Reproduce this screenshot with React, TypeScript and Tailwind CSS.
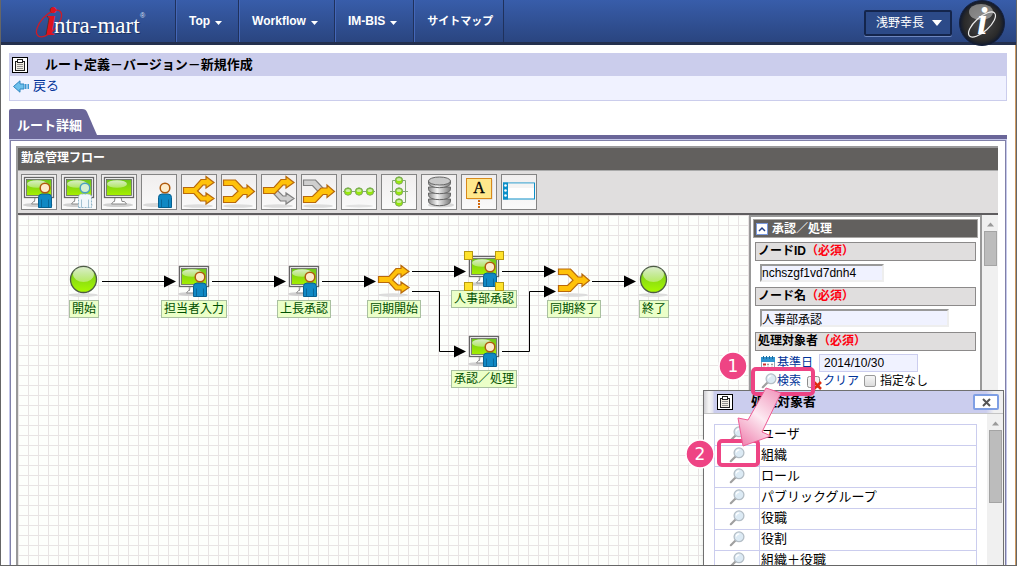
import { useState } from 'react'
import type { ReactNode } from 'react'

const gold = { fill: '#ffc20a', stroke: '#b8690c', strokeWidth: 1.2 }
const silver = { fill: '#cfcfcf', stroke: '#808080', strokeWidth: 1.2 }

// SVG gradients shared by every icon
function Defs() {
  return (
    <svg width="0" height="0" className="absolute" aria-hidden="true">
      <defs>
        <linearGradient id="screen" x1="0" y1="0" x2="0" y2="1">
          <stop offset="0" stopColor="#6cc41c" />
          <stop offset="1" stopColor="#a6f000" />
        </linearGradient>
        <linearGradient id="ball" x1="0" y1="0" x2="0" y2="1">
          <stop offset="0" stopColor="#6fc024" />
          <stop offset="1" stopColor="#a8fa00" />
        </linearGradient>
        <linearGradient id="gloss" x1="0" y1="0" x2="0" y2="1">
          <stop offset="0" stopColor="#ffffff" stopOpacity="0.75" />
          <stop offset="1" stopColor="#ffffff" stopOpacity="0.35" />
        </linearGradient>
        <linearGradient id="disc" x1="0" y1="0" x2="1" y2="0">
          <stop offset="0" stopColor="#8a8a8a" />
          <stop offset="0.4" stopColor="#f4f4f4" />
          <stop offset="1" stopColor="#7a7a7a" />
        </linearGradient>
        <linearGradient id="pinkArrow" x1="0.8" y1="0" x2="0.2" y2="1">
          <stop offset="0" stopColor="#f29cc0" />
          <stop offset="0.5" stopColor="#fdeaf2" />
          <stop offset="1" stopColor="#f08ab4" />
        </linearGradient>
        <radialGradient id="badge">
          <stop offset="0" stopColor="#4a4a4a" />
          <stop offset="0.8" stopColor="#2a2a2a" />
          <stop offset="1" stopColor="#10192e" />
        </radialGradient>
      </defs>
    </svg>
  )
}

function Icon({ children }: { children: ReactNode }) {
  return (
    <svg width="32" height="32" viewBox="0 0 32 32" className="block overflow-visible" aria-hidden="true">
      {children}
    </svg>
  )
}

function Monitor() {
  return (
    <>
      <ellipse cx="15" cy="29" rx="15" ry="2" fill="#d0d0d0" />
      <path d="M12 21.500h6l1 4h2.500l2 2.500h-15l2-2.500h1z" fill="#fff" stroke="#8a8a8a" />
      <rect x="1.500" y="1.500" width="29" height="20" fill="#fff" stroke="#666" strokeWidth="1.300" />
      <rect x="3.500" y="3.500" width="25" height="16" fill="url(#screen)" stroke="#666" strokeWidth="0.800" />
      <ellipse cx="14" cy="8" rx="10" ry="3.800" fill="url(#gloss)" />
    </>
  )
}

function Person({ ghost = false }: { ghost?: boolean }) {
  return (
    <>
      <path
        d="M15.500 31.500V21.500q0-3.500 3.500-3.500h6q3.500 0 3.500 3.500V31.500z"
        fill={ghost ? '#f1f7fa' : '#1088c4'}
        stroke={ghost ? '#8fb4c8' : '#08608f'}
        strokeDasharray={ghost ? '2 1' : undefined}
      />
      <path d="M18.500 23.500v8M25.500 23.500v8" stroke={ghost ? '#8fb4c8' : '#08608f'} strokeWidth="0.8" />
      <circle cx="22" cy="12" r="4.800" fill={ghost ? '#d6efcf' : '#fdeccb'} stroke={ghost ? '#4aa0c0' : '#b05a0c'} strokeWidth="1.500" />
    </>
  )
}

function GroundShadow() {
  return <ellipse cx="15" cy="30" rx="15" ry="1.800" fill="#dcdcdc" />
}

function TaskIcon() {
  return <Icon><Monitor /><Person /></Icon>
}

function SplitIcon() {
  return (
    <Icon>
      <GroundShadow />
      <path {...gold} d="M.5 11.500H11L18 3.500H23V.5L31 6.500L23 12V9H20L14.500 15L20 20H23V17L31 22.500L23 28V25H17.500L11 17.500H.5Z" />
    </Icon>
  )
}

function MergeIcon() {
  return (
    <Icon>
      <GroundShadow />
      <path {...gold} d="M.5 4H12.500L20 12H24V9L31.500 15.500L24 21.500V18.500H20L12.500 26.500H.5V20.500H9.500L15 15.200L9.500 9.500H.5Z" />
    </Icon>
  )
}

function BranchIcon() {
  return (
    <Icon>
      <GroundShadow />
      <path {...silver} d="M10 14.500H14.500L20 20H23V17L31 22.500L23 28V25H17.500L10 17Z" />
      <path {...gold} d="M.5 11.500H11L18 3.500H23V.5L31 6.500L23 12V9H20L12 17.500H.5Z" />
    </Icon>
  )
}

function JoinIcon() {
  return (
    <Icon>
      <GroundShadow />
      <path {...silver} d="M.5 4H12.500L20 12V16H15.500L9.500 9.500H.5Z" />
      <path {...gold} d="M.5 20.500H9.500L18 12H24V9L31.500 15.500L24 21.500V18.500H20L12.500 26.500H.5Z" />
    </Icon>
  )
}

function Ball({ cx, cy }: { cx: number; cy: number }) {
  return (
    <>
      <circle cx={cx} cy={cy} r="3.700" fill="url(#ball)" stroke="#7fa860" />
      <ellipse cx={cx} cy={cy - 1} rx="2.500" ry="1.600" fill="#fff" opacity="0.6" />
    </>
  )
}

function SerialIcon() {
  return (
    <Icon>
      <path d="M0 15.500H32" stroke="#86a878" />
      <Ball cx={5} cy={15.5} />
      <Ball cx={16} cy={15.5} />
      <Ball cx={27} cy={15.5} />
      <ellipse cx="16" cy="30" rx="14" ry="1.500" fill="#e2e2e2" />
    </Icon>
  )
}

function ParallelIcon() {
  return (
    <Icon>
      <path d="M9.500 4.500H22.500V26.500H9.500ZM7 15.500H25" fill="none" stroke="#86a878" />
      <Ball cx={16} cy={4.5} />
      <Ball cx={16} cy={15.5} />
      <Ball cx={16} cy={26.5} />
    </Icon>
  )
}

function DatabaseIcon() {
  return (
    <Icon>
      <ellipse cx="18" cy="29" rx="13" ry="2.500" fill="#d6d6d6" />
      {[24, 18, 12, 6].map(y => (
        <path key={y} d={`M5.500 ${y - 1}v2.500a11 4.200 0 0 0 22 0v-2.500z`} fill="url(#disc)" stroke="#666" />
      ))}
      <ellipse cx="16.500" cy="5" rx="11" ry="4" fill="#c8c8c8" stroke="#666" />
    </Icon>
  )
}

function NoteIcon() {
  return (
    <Icon>
      <rect x="4.500" y="3.500" width="25" height="20" fill="#b9b9b9" opacity="0.6" />
      <rect x="3.500" y="2.500" width="25" height="20" fill="#ffe88c" stroke="#d88a1c" />
      <text x="16" y="17" textAnchor="middle" fontFamily="Liberation Serif, serif" fontSize="16" stroke="#000" strokeWidth="0.300">A</text>
      <path d="M16 24v8" stroke="#d06a10" strokeWidth="2" strokeDasharray="2 1" />
    </Icon>
  )
}

function LaneIcon() {
  return (
    <Icon>
      <rect x="0.500" y="7" width="31" height="16" fill="#fff" stroke="#0d8fc8" />
      <path d="M5 12h26V7.500H5z" fill="#ececec" opacity="0.6" />
      <rect x="0" y="6.500" width="5" height="17" fill="#0d8fc8" />
      {[9.5, 14.5, 19.5].map(y => (
        <circle key={y} cx="2.500" cy={y} r="1.300" fill="#fff" />
      ))}
    </Icon>
  )
}

function TerminalIcon() {
  return (
    <Icon>
      <GroundShadow />
      <circle cx="15.500" cy="14.500" r="13" fill="url(#ball)" stroke="#4c5c44" strokeWidth="1.300" />
      <ellipse cx="15.500" cy="9.500" rx="10.500" ry="7.500" fill="url(#gloss)" />
    </Icon>
  )
}

function SearchIcon() {
  return (
    <svg width="16" height="16" viewBox="0 0 16 16" className="block shrink-0" aria-hidden="true">
      <path d="M1.800 14.200L6.500 9.500" stroke="#a0a0a0" strokeWidth="2.200" strokeLinecap="round" />
      <circle cx="10" cy="5.800" r="4.900" fill="#dceaf4" stroke="#b4bec6" strokeWidth="1.300" />
      <path d="M7.300 5.500a3 3 0 0 1 3-2.700" stroke="#fff" strokeWidth="1.200" fill="none" />
    </svg>
  )
}

function ClipboardIcon() {
  return (
    <svg width="16" height="16" viewBox="0 0 16 16" className="block shrink-0" aria-hidden="true">
      <rect x="0.500" y="0.500" width="15" height="15" fill="#fff" stroke="#000" />
      <rect x="3.500" y="4.500" width="9" height="9" fill="#f4f0e4" stroke="#222" />
      <rect x="5.500" y="2.500" width="5" height="3" fill="#fff" stroke="#222" />
      <path d="M5 7.500h6M5 9.500h6M5 11.500h6" stroke="#777" strokeWidth="0.800" />
    </svg>
  )
}

const tools = [
  { name: '承認', icon: <TaskIcon /> },
  { name: '動的承認', icon: <Icon><Monitor /><Person ghost /></Icon> },
  { name: 'システム', icon: <Icon><Monitor /></Icon> },
  { name: '確認', icon: <Icon><ellipse cx="14" cy="29" rx="14" ry="2" fill="#d9d9d9" /><Person /></Icon> },
  { name: '同期開始', icon: <SplitIcon /> },
  { name: '同期終了', icon: <MergeIcon /> },
  { name: '分岐開始', icon: <BranchIcon /> },
  { name: '分岐終了', icon: <JoinIcon /> },
  { name: '横配置', icon: <SerialIcon /> },
  { name: '縦配置', icon: <ParallelIcon /> },
  { name: 'テンプレート', icon: <DatabaseIcon /> },
  { name: '注釈', icon: <NoteIcon /> },
  { name: 'スイムレーン', icon: <LaneIcon /> },
]

// x は中心、y はアイコン上端（キャンバス座標）
const nodes = [
  { label: '開始', x: 66, y: 50, icon: <TerminalIcon /> },
  { label: '担当者入力', x: 176, y: 50, icon: <TaskIcon /> },
  { label: '上長承認', x: 286, y: 50, icon: <TaskIcon /> },
  { label: '同期開始', x: 376, y: 50, icon: <SplitIcon /> },
  { label: '人事部承認', x: 466, y: 40, icon: <TaskIcon />, selected: true },
  { label: '承認／処理', x: 466, y: 120, icon: <TaskIcon /> },
  { label: '同期終了', x: 556, y: 50, icon: <MergeIcon /> },
  { label: '終了', x: 636, y: 50, icon: <TerminalIcon /> },
]

const links = [
  { line: 'M84 66.500H150', tip: [158, 66.5] },
  { line: 'M194 66.500H260', tip: [268, 66.5] },
  { line: 'M304 66.500H350', tip: [358, 66.5] },
  { line: 'M394 56.500H440', tip: [448, 56.5] },
  { line: 'M394 76.500H421.500V136.500H440', tip: [448, 136.5] },
  { line: 'M484 56.500H530', tip: [538, 56.5] },
  { line: 'M484 136.500H511.500V76.500H530', tip: [538, 76.5] },
  { line: 'M574 66.500H610', tip: [618, 66.5] },
]

const targets = ['ユーザ', '組織', 'ロール', 'パブリックグループ', '役職', '役割', '組織＋役職']

function Caret() {
  return (
    <svg width="7" height="4" viewBox="0 0 7 4" className="mt-1" aria-hidden="true">
      <path d="M0 0h7L3.500 4z" fill="#fff" />
    </svg>
  )
}

function Header() {
  const menus = [
    { name: 'Top', caret: true },
    { name: 'Workflow', caret: true },
    { name: 'IM-BIS', caret: true },
    { name: 'サイトマップ', caret: false },
  ]
  return (
    <header className="flex h-[45px] shrink-0 border-b-[3px] border-[#24304e] bg-linear-to-b from-[#385daa] to-[#2a4580]">
      <a href="#" aria-label="intra-mart" className="block w-[174px] shrink-0">
        <svg width="174" height="42" viewBox="0 0 174 42" className="block overflow-visible">
          <ellipse cx="48" cy="23.500" rx="16.500" ry="8" transform="rotate(-48 48 23.500)" fill="none" stroke="#cc1c28" strokeWidth="1.300" />
          <text x="44" y="35" fontFamily="Liberation Serif, serif" fontSize="41" fontWeight="bold" fontStyle="italic" fill="#dc141e">i</text>
          <text x="54" y="34" fontFamily="Liberation Serif, serif" fontSize="23" fill="#101c38" opacity="0.500">ntra-mart</text>
          <text x="53" y="33" fontFamily="Liberation Serif, serif" fontSize="23" fill="#fff">ntra-mart</text>
          <text x="139" y="18" fontFamily="Liberation Sans, sans-serif" fontSize="7" fill="#dfe5f2">®</text>
        </svg>
      </a>
      <nav className="flex border-l border-[#1f315c]">
        {menus.map(menu => (
          <a
            key={menu.name}
            href="#"
            className={`flex items-center gap-[5px] border-r border-l border-r-[#1f315c] border-l-[#4467b8] pl-3 font-bold text-white ${menu.caret ? 'pr-4 text-xs' : 'pr-2.5 text-[11px]'}`}
          >
            {menu.name}
            {menu.caret && <Caret />}
          </a>
        ))}
      </nav>
      <div className="ml-auto flex items-start gap-[7px] pr-[11px]">
        <button type="button" aria-haspopup="menu" className="mt-2.5 flex h-[26px] items-center gap-2 rounded-xs border-2 border-[#14254c] bg-[#2c4a88] pr-2 pl-2.5 text-xs text-white shadow-[0_1px_0_#6d87c0]">
          浅野幸長
          <svg width="10" height="6" viewBox="0 0 10 6" aria-hidden="true">
            <path d="M0 0h10L5 6z" fill="#fff" />
          </svg>
        </button>
        <svg width="46" height="46" viewBox="0 0 46 46" className="shrink-0" aria-hidden="true">
          <circle cx="23" cy="23" r="22.500" fill="url(#badge)" stroke="#15203c" />
          <ellipse cx="22" cy="12" rx="12" ry="8" fill="#fff" opacity="0.400" />
          <ellipse cx="23" cy="24.500" rx="17" ry="7" transform="rotate(-42 23 24.500)" fill="none" stroke="#eee" strokeWidth="1.200" />
          <text x="18" y="34" fontFamily="Liberation Serif, serif" fontSize="38" fontStyle="italic" fontWeight="bold" fill="#fff">i</text>
        </svg>
      </div>
    </header>
  )
}

function FlowCanvas() {
  return (
    <div className="relative min-w-0 flex-1 overflow-hidden bg-[#fdfffc] bg-[linear-gradient(#e8e4e4_1px,transparent_1px),linear-gradient(90deg,#e8e4e4_1px,transparent_1px)] bg-[size:10px_10px]">
      <svg width="731" height="351" viewBox="0 0 731 351" className="absolute top-0 left-0" aria-hidden="true">
        {links.map(({ line, tip: [x, y] }) => (
          <g key={line}>
            <path d={line} fill="none" stroke="#000" />
            <path d={`M${x} ${y}l-12 -6v12z`} />
          </g>
        ))}
      </svg>
      {nodes.map(node => (
        <div
          key={node.label}
          className="absolute flex -translate-x-1/2 flex-col items-center gap-[3px]"
          style={{ left: node.x, top: node.y }}
        >
          <div className="relative">
            {node.icon}
            {node.selected && (
              <>
                <i className="absolute -top-1 -left-1 size-[9px] border border-[#b89a10] bg-[#ffe32c]" />
                <i className="absolute -top-1 -right-1 size-[9px] border border-[#b89a10] bg-[#ffe32c]" />
                <i className="absolute -bottom-1 -left-1 size-[9px] border border-[#b89a10] bg-[#ffe32c]" />
                <i className="absolute -right-1 -bottom-1 size-[9px] border border-[#b89a10] bg-[#ffe32c]" />
              </>
            )}
          </div>
          <span className="border border-[#a9c0a0] bg-[#ebffc8] px-[2px] text-xs leading-4 whitespace-nowrap text-[#005000]">
            {node.label}
          </span>
        </div>
      ))}
    </div>
  )
}

function FieldTitle({ htmlFor, children }: { htmlFor: string; children: ReactNode }) {
  return (
    <label htmlFor={htmlFor} className="mx-[2px] block h-[19px] border border-[#8c8a8a] bg-[#e0dede] px-[2px] text-xs leading-[17px] font-bold text-black">
      {children}
      <span className="text-[#ff0010]">（必須）</span>
    </label>
  )
}

function PropertyPanel() {
  const [nodeId, setNodeId] = useState('nchszgf1vd7dnh4')
  const [nodeName, setNodeName] = useState('人事部承認')
  const [baseDate, setBaseDate] = useState('2014/10/30')
  const field = 'ml-[7px] block h-[18px] border-2 border-t-[#999] border-r-[#eee] border-b-[#eee] border-l-[#999] bg-[#f0f2ff] text-xs text-black outline-none'

  return (
    <aside className="w-[233px] shrink-0 overflow-hidden border-x-2 border-t-2 border-[#999] bg-white p-[2px]">
      <h2 className="flex h-[19px] items-center gap-1 border border-[#a8a6a4] bg-[#62605e] px-[2px] text-xs font-bold text-white">
        <button type="button" aria-label="折りたたむ" className="flex size-3 items-center justify-center border border-[#7a9adf] bg-white">
          <svg width="8" height="6" viewBox="0 0 8 6"><path d="M1 5l3-3 3 3" fill="none" stroke="#20408c" strokeWidth="1.500" /></svg>
        </button>
        承認／処理
      </h2>
      <div className="mt-1 mb-[5px] flex flex-col gap-[3px]">
        <FieldTitle htmlFor="node-id">ノードID</FieldTitle>
        <input id="node-id" className={`${field} w-[124px]`} value={nodeId} onChange={e => setNodeId(e.target.value)} />
      </div>
      <div className="mb-[5px] flex flex-col gap-[3px]">
        <FieldTitle htmlFor="node-name">ノード名</FieldTitle>
        <input id="node-name" className={`${field} w-[189px]`} value={nodeName} onChange={e => setNodeName(e.target.value)} />
      </div>
      <FieldTitle htmlFor="base-date">処理対象者</FieldTitle>
      <div className="mt-[3px] flex h-[18px] items-center gap-[2px] pl-2">
        <svg width="14" height="14" viewBox="0 0 14 14" className="shrink-0" aria-hidden="true">
          <rect x="0.500" y="1.500" width="13" height="12" fill="#fff" stroke="#8fa6b8" />
          <rect x="0" y="1" width="14" height="5" fill="#2f94d0" />
          <path d="M2.500 0v3M5.500 0v3M8.500 0v3M11.500 0v3" stroke="#1c6a9c" />
          <path d="M6 8.500h2M6 11.500h2M10 8.500h2M10 11.500h2M2 11.500h2" stroke="#9a9a9a" strokeWidth="1.500" />
          <path d="M2 8.500h3" stroke="#d03030" strokeWidth="2" />
        </svg>
        <a href="#" className="text-xs text-[#003399]">基準日</a>
        <input id="base-date" className="ml-1 h-[18px] w-[99px] border border-[#cbcdee] bg-[#f0f2ff] px-1 text-xs outline-none" value={baseDate} onChange={e => setBaseDate(e.target.value)} />
      </div>
      <div className="flex h-[18px] items-center text-xs">
        <a href="#" className="flex items-center pl-2 text-[#003399]"><SearchIcon />検索</a>
        <a href="#" className="ml-[5px] flex items-center text-[#003399]">
          <svg width="17" height="17" viewBox="0 0 17 17" aria-hidden="true">
            <rect x="1.500" y="3.500" width="12" height="11" rx="2" fill="#f2f2f2" stroke="#8c8c8c" />
            <path d="M8 9l7 7M15 9l-7 7" stroke="#e02c10" strokeWidth="2.500" />
          </svg>
          クリア
        </a>
        <label className="ml-[5px] flex items-center gap-1">
          <input type="checkbox" className="size-3 appearance-none rounded-xs border border-[#9a9a9a] bg-linear-to-b from-[#f6f6f6] to-[#dcdcdc]" />
          指定なし
        </label>
      </div>
    </aside>
  )
}

function ScrollBar({ thumb }: { thumb: ReactNode }) {
  return (
    <div className="flex w-4 shrink-0 flex-col items-center gap-1 bg-[#f0f0f0] pt-[7px]">
      <svg width="7" height="5" viewBox="0 0 7 5" className="block" aria-hidden="true">
        <path d="M0 4.500h7L3.500 .5z" fill="#9a9a9a" />
      </svg>
      {thumb}
    </div>
  )
}

function TargetDialog() {
  return (
    <div role="dialog" aria-label="処理対象者" className="absolute top-[390px] right-3 bottom-0 flex w-[301px] flex-col overflow-hidden border border-b-0 border-[#707070] bg-white shadow-md">
      <div className="flex h-[23px] shrink-0 items-center border-b border-[#c4c4c4] bg-[linear-gradient(90deg,#d0d0d4,#f6f6f6_5px,#e4e4ee_9px,#cbcdee_10px,#cbcdee_282px,#f0f0f0_290px)] pr-1 pl-[13px]">
        <ClipboardIcon />
        <h2 className="pl-[18px] text-[13px] leading-5 font-bold">処理対象者</h2>
        <button type="button" aria-label="閉じる" className="ml-auto flex h-4 w-[26px] items-center justify-center rounded-xs border-2 border-[#7f9fe4] bg-white">
          <svg width="9" height="9" viewBox="0 0 9 9"><path d="M1 1l7 7M8 1l-7 7" stroke="#555" strokeWidth="2" /></svg>
        </button>
      </div>
      <div className="flex min-h-0 flex-1">
        <div className="min-w-0 flex-1 overflow-hidden px-2.5 pt-2.5">
          <table className="w-full border-collapse text-[13px] leading-[18px]">
            <tbody>
              {targets.map(target => (
                <tr key={target} className="h-[21px] align-top">
                  <td className="w-[45px] border border-[#cbcdee] p-0 pt-px">
                    <button type="button" aria-label={`${target}を検索`} className="mx-auto block">
                      <SearchIcon />
                    </button>
                  </td>
                  <td className="border border-[#cbcdee] px-px py-0">{target}</td>
                </tr>
              ))}
            </tbody>
          </table>
        </div>
        <ScrollBar thumb={<div className="h-[73px] w-[13px] border border-[#a4a4a4] bg-[#bcbcbc]" />} />
      </div>
    </div>
  )
}

// 操作手順の番号と矢印
function Steps() {
  return (
    <svg width="132" height="122" viewBox="0 0 132 122" className="pointer-events-none absolute top-[350px] right-[200px]" fontFamily="DejaVu Sans, sans-serif" fontSize="17" fill="#fff" textAnchor="middle">
      <rect x="69" y="19" width="60" height="25" rx="3" fill="none" stroke="#ee4484" strokeWidth="4" />
      <rect x="35" y="91" width="39" height="24" rx="3" fill="none" stroke="#ee4484" strokeWidth="4" />
      <path d="M82 38L97 43L78 82L87 86L59 96L54 68L64 70Z" fill="url(#pinkArrow)" stroke="#ee5c94" />
      <circle cx="49" cy="16" r="14" fill="#ee4484" stroke="#fff" strokeWidth="1.500" />
      <text x="49" y="22">1</text>
      <circle cx="16" cy="104" r="14" fill="#ee4484" stroke="#fff" strokeWidth="1.500" />
      <text x="16" y="110">2</text>
    </svg>
  )
}

export default function App() {
  return (
    <div className="relative flex h-screen flex-col overflow-hidden border-x border-b border-[#666] bg-white font-['Liberation_Sans','Noto_Sans_CJK_JP',sans-serif] text-black">
      <Defs />
      <Header />
      <main className="flex min-h-0 flex-1 flex-col border-r border-[#cf9a62] px-2 pt-2">
        <div className="flex h-[23px] shrink-0 items-center gap-[17px] bg-[#cbcdec] pl-[3px]">
          <ClipboardIcon />
          <h1 className="text-[13px] leading-5 font-bold">ルート定義－バージョン－新規作成</h1>
        </div>
        <div className="flex h-[25px] shrink-0 items-center border border-t-0 border-[#cbcdec] bg-[#f0f2ff] pb-1 pl-[3px]">
          <a href="#" className="flex items-center gap-1 text-[13px] text-[#003399]">
            <svg width="16" height="13" viewBox="0 0 16 13" aria-hidden="true">
              <path d="M.5 6.500L7 .8V4h4v5H7v3.200z" fill="#6cc0ec" stroke="#2f86c0" />
              <path d="M12 4h1.500v5H12zM14.500 4h1.500v5h-1.500z" fill="#3c98d4" />
            </svg>
            戻る
          </a>
        </div>

        <div className="mt-2 flex h-[26px] shrink-0">
          <a href="#" className="flex items-center rounded-tl-xs bg-[#6a6699] pt-2 pl-2 text-[13px] font-bold text-white">ルート詳細</a>
          <svg width="16" height="26" viewBox="0 0 16 26" aria-hidden="true">
            <path d="M0 0c3 0 4 1 5 3L15 26H0z" fill="#6a6699" />
          </svg>
        </div>
        <div className="h-1 shrink-0 bg-[#6a6699]" />

        <div className="flex min-h-0 flex-1 border border-b-0 border-[#c5c8ea]">
          <div className="flex min-w-0 flex-1 border border-b-0 border-[#8080a8] pt-[5px] pr-[7px] pl-[5px]">
            <section className="flex min-w-0 flex-1 flex-col border-t-2 border-l-2 border-[#999]">
              <h2 className="h-[22px] shrink-0 bg-[#62605e] pl-[3px] text-xs leading-5 font-bold text-white">勤怠管理フロー</h2>
              <div className="flex h-[45px] shrink-0 gap-1 border-t border-b-2 border-t-[#aaa] border-b-[#5f5d5f] bg-[#e0dede] px-[3px] pt-[3px]">
                {tools.map(tool => (
                  <button key={tool.name} type="button" aria-label={tool.name} className="size-9 shrink-0 border border-[#848484] bg-linear-to-b from-[#f0eeee] to-[#fafafa] p-px">
                    {tool.icon}
                  </button>
                ))}
              </div>
              <div className="flex min-h-0 flex-1">
                <FlowCanvas />
                <PropertyPanel />
                <ScrollBar thumb={<div className="h-[35px] w-[13px] border border-[#a4a4a4] bg-[#bcbcbc]" />} />
              </div>
            </section>
          </div>
        </div>
      </main>
      <TargetDialog />
      <Steps />
    </div>
  )
}
